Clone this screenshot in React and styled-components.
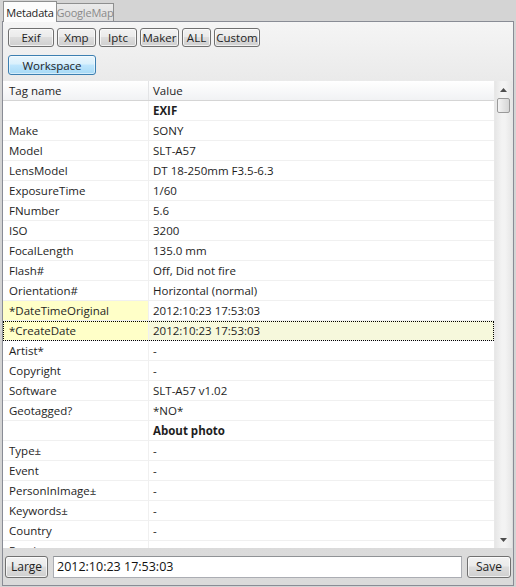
import styled, { createGlobalStyle, css } from 'styled-components';

const GlobalStyle = createGlobalStyle`
    html, body {
        margin: 0;
        padding: 0;
    }
    body {
        font-family: "Open Sans", "Noto Sans", sans-serif;
        font-size: 11.5px;
        color: #1e1e1e;
    }
`;

const rows = [
    { value: 'EXIF', group: true },
    { name: 'Make', value: 'SONY' },
    { name: 'Model', value: 'SLT-A57' },
    { name: 'LensModel', value: 'DT 18-250mm F3.5-6.3' },
    { name: 'ExposureTime', value: '1/60' },
    { name: 'FNumber', value: '5.6' },
    { name: 'ISO', value: '3200' },
    { name: 'FocalLength', value: '135.0 mm' },
    { name: 'Flash#', value: 'Off, Did not fire' },
    { name: 'Orientation#', value: 'Horizontal (normal)' },
    { name: '*DateTimeOriginal', value: '2012:10:23 17:53:03', marked: true },
    { name: '*CreateDate', value: '2012:10:23 17:53:03', marked: true, selected: true },
    { name: 'Artist*', value: '-' },
    { name: 'Copyright', value: '-' },
    { name: 'Software', value: 'SLT-A57 v1.02' },
    { name: 'Geotagged?', value: '*NO*' },
    { value: 'About photo', group: true },
    { name: 'Type±', value: '-' },
    { name: 'Event', value: '-' },
    { name: 'PersonInImage±', value: '-' },
    { name: 'Keywords±', value: '-' },
    { name: 'Country', value: '-' },
    { name: 'Province', value: '' },
];

const groups = ['Exif', 'Xmp', 'Iptc', 'Maker', 'ALL', 'Custom'];
const groupWidths = [46, 39, 38, 39, 29, 46];

const Window = styled.div`
    width: 516px;
    height: 587px;
    background: #d4d4d4;
    display: flex;
    flex-direction: column;
    overflow: hidden;
`;

const TabBar = styled.div`
    height: 21px;
    display: flex;
    align-items: flex-end;
    padding-left: 3px;
    box-sizing: border-box;
`;

const Tab = styled.div`
    width: ${p => p.$w}px;
    height: 18px;
    display: flex;
    align-items: center;
    justify-content: center;
    border: 1px solid #8e8f8f;
    border-bottom: none;
    box-sizing: border-box;
    font-size: 11px;
    letter-spacing: -0.2px;
    ${p => p.$active ? css`
        background: #fcfcfc;
        color: #1e1e1e;
        position: relative;
        z-index: 1;
        margin-bottom: -1px;
        height: 21px;
    ` : css`
        background: linear-gradient(#ebebeb, #dcdcdc);
        color: #8a8a8a;
        border-left: none;
    `}
`;

const Panel = styled.div`
    margin: 0 2px;
    height: 565px;
    border: 1px solid #898c95;
    background: linear-gradient(#f5f5f5 0px, #e6e6e6 80px, #dadada 100%);
    display: flex;
    flex-direction: column;
    box-sizing: border-box;
`;

const Toolbar = styled.div`
    display: flex;
    gap: 3px;
    padding: 6px 0 0 5px;
`;

const buttonBase = css`
    height: 19px;
    box-sizing: border-box;
    border: 1px solid #707070;
    border-radius: 3px;
    display: flex;
    align-items: center;
    justify-content: center;
    font-family: inherit;
    font-size: 11.5px;
    color: #1e1e1e;
    padding: 0;
    background: linear-gradient(#f2f2f2 0%, #ebebeb 45%, #dddddd 50%, #cfcfcf 100%);
    box-shadow: inset 0 0 0 1px rgba(255, 255, 255, 0.7);
`;

const Button = styled.button`
    ${buttonBase}
    width: ${p => p.$w}px;
`;

const Workspace = styled.button`
    ${buttonBase}
    width: 88px;
    height: 20px;
    border-color: #3c7fb1;
    background: linear-gradient(#eaf6fd 0%, #d9f0fc 45%, #bee6fd 50%, #a7d9f5 100%);
    box-shadow: inset 0 0 0 1px rgba(255, 255, 255, 0.5);
`;

const WorkspaceRow = styled.div`
    padding: 8px 0 0 5px;
`;

const Table = styled.div`
    margin: 6px 1px 0 0;
    height: 467px;
    background: #fff;
    display: flex;
    overflow: hidden;
`;

const Grid = styled.div`
    flex: 1;
    display: flex;
    flex-direction: column;
    overflow: hidden;
`;

const Header = styled.div`
    height: 19px;
    flex-shrink: 0;
    display: flex;
    background: linear-gradient(#ffffff, #f1f2f4);
    border-bottom: 1px solid #d5d5d5;
`;

const HeaderCell = styled.div`
    width: ${p => p.$w ? `${p.$w}px` : 'auto'};
    flex: ${p => p.$w ? 'none' : 1};
    box-sizing: border-box;
    padding-left: ${p => p.$w ? 6 : 4}px;
    display: flex;
    align-items: center;
    border-right: ${p => p.$w ? '1px solid #e3e4e6' : 'none'};
`;

const Row = styled.div`
    height: 20px;
    flex-shrink: 0;
    display: flex;
    box-sizing: border-box;
    border-bottom: 1px solid #f0f0f0;
    ${p => p.$selected && css`
        background: #f6f8dc;
        outline: 1px dotted #000;
        outline-offset: -1px;
    `}
`;

const Cell = styled.div`
    box-sizing: border-box;
    display: flex;
    align-items: center;
    white-space: nowrap;
    ${p => p.$first ? css`
        width: 146px;
        padding-left: 6px;
        border-right: 1px solid #f0f0f0;
    ` : css`
        flex: 1;
        padding-left: 4px;
    `}
    ${p => p.$bold && css`font-weight: 700;`}
    ${p => p.$marked && css`background: #ffffc8;`}
`;

const Scrollbar = styled.div`
    width: 17px;
    flex-shrink: 0;
    background: linear-gradient(90deg, #e6e6e6, #f3f3f3 40%, #f3f3f3 60%, #e6e6e6);
    border-left: 1px solid #e8e8e8;
    display: flex;
    flex-direction: column;
    align-items: center;
`;

const Arrow = styled.div`
    height: 17px;
    width: 100%;
    display: flex;
    align-items: center;
    justify-content: center;
`;

const Thumb = styled.div`
    width: 13px;
    height: 15px;
    box-sizing: border-box;
    border: 1px solid #9a9a9a;
    border-radius: 2px;
    background: linear-gradient(90deg, #f4f4f4, #e4e4e4 50%, #d6d6d6);
`;

const Track = styled.div`
    flex: 1;
`;

const BottomBar = styled.div`
    flex: 1;
    display: flex;
    align-items: center;
    gap: 5px;
    padding: 0 2px 0 2px;
`;

const SmallButton = styled.button`
    ${buttonBase}
    height: 22px;
    width: ${p => p.$w}px;
    font-size: 12px;
`;

const Input = styled.div`
    flex: 1;
    height: 22px;
    box-sizing: border-box;
    border: 1px solid #abadb3;
    border-top-color: #8f9295;
    background: #fff;
    display: flex;
    align-items: center;
    padding-left: 3px;
    font-size: 12.5px;
    color: #111;
`;

const Triangle = ({ up }) => (
    <svg width="7" height="4" viewBox="0 0 7 4">
        <polygon points={up ? '3.5,0 7,4 0,4' : '0,0 7,0 3.5,4'} fill="#4d4d4d" />
    </svg>
);

const App = () => (
    <>
        <GlobalStyle />
        <Window>
            <TabBar>
                <Tab $active $w={54}>Metadata</Tab>
                <Tab $w={57}>GoogleMap</Tab>
            </TabBar>
            <Panel>
                <Toolbar>
                    {groups.map((g, i) => (
                        <Button key={g} $w={groupWidths[i]}>{g}</Button>
                    ))}
                </Toolbar>
                <WorkspaceRow>
                    <Workspace>Workspace</Workspace>
                </WorkspaceRow>
                <Table>
                    <Grid>
                        <Header>
                            <HeaderCell $w={146}>Tag name</HeaderCell>
                            <HeaderCell>Value</HeaderCell>
                        </Header>
                        {rows.map((r, i) => (
                            <Row key={i} $selected={r.selected}>
                                <Cell $first $marked={r.marked}>{r.name}</Cell>
                                <Cell $bold={r.group}>{r.value}</Cell>
                            </Row>
                        ))}
                    </Grid>
                    <Scrollbar>
                        <Arrow><Triangle up /></Arrow>
                        <Thumb />
                        <Track />
                        <Arrow><Triangle /></Arrow>
                    </Scrollbar>
                </Table>
                <BottomBar>
                    <SmallButton $w={43}>Large</SmallButton>
                    <Input>2012:10:23 17:53:03</Input>
                    <SmallButton $w={44}>Save</SmallButton>
                </BottomBar>
            </Panel>
        </Window>
    </>
);

export default App;
